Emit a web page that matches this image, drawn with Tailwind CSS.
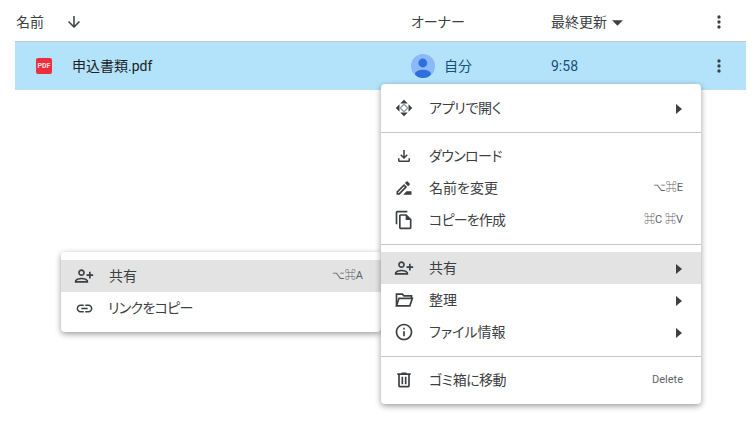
<!DOCTYPE html>
<html lang="ja">
<head>
    <meta charset="UTF-8">
    <title>Drive</title>
    <script src="https://cdn.jsdelivr.net/npm/@tailwindcss/browser@4"></script>
</head>
<body class="bg-white">
    <div class="relative w-[755px] h-[434px] overflow-hidden bg-white text-[14px] text-[#3c4043] [font-feature-settings:'palt'] font-['Roboto','Noto_Sans_CJK_JP',sans-serif]">
        <div class="ml-[15px] w-[731px]">
            <div class="grid grid-cols-[396px_140px_1fr_56px] items-center h-[42px] border-b border-[#c4c7c5] pt-[3px]">
                <div class="flex items-center pl-[1px]">
                    <span class="w-[49px]">名前</span>
                    <svg class="w-[18px] h-[18px] fill-[#3c4043]" viewBox="0 0 24 24"><path d="M20 12l-1.41-1.41L13 16.17V4h-2v12.17l-5.58-5.59L4 12l8 8 8-8z"/></svg>
                </div>
                <span>オーナー</span>
                <div class="flex items-center gap-[4px]">
                    <span>最終更新</span>
                    <svg class="w-[13px] h-[13px] fill-[#3c4043]" viewBox="0 0 12 12"><path d="M1 4h10L6 9z"/></svg>
                </div>
                <svg class="w-[20px] h-[20px] ml-[19px] fill-[#3c4043]" viewBox="0 0 24 24"><path d="M12 8a2 2 0 100-4 2 2 0 000 4zm0 2a2 2 0 100 4 2 2 0 000-4zm0 6a2 2 0 100 4 2 2 0 000-4z"/></svg>
            </div>
            <div class="grid grid-cols-[396px_140px_1fr_56px] items-center h-[48px] bg-[#b3e3fb]">
                <div class="flex items-center pl-[21px]">
                    <div class="flex items-center justify-center w-[16px] h-[16px] rounded-[2px] bg-[#f02d3f] text-[#ffe4e6] text-[7px] font-bold leading-none">PDF</div>
                    <span class="ml-[20px] text-[#202124]">申込書類.pdf</span>
                </div>
                <div class="flex items-center gap-[9px] text-[#174e7c]">
                    <svg class="w-[24px] h-[24px] rounded-full bg-[#8ab8f8]" viewBox="0 0 24 24"><circle cx="11.8" cy="9" r="4.4" fill="#2f6fdb"/><ellipse cx="12" cy="20" rx="8" ry="4.2" fill="#2f6fdb"/></svg>
                    <span>自分</span>
                </div>
                <span class="text-[#174e7c]">9:58</span>
                <svg class="w-[20px] h-[20px] ml-[19px] fill-[#3c4043]" viewBox="0 0 24 24"><path d="M12 8a2 2 0 100-4 2 2 0 000 4zm0 2a2 2 0 100 4 2 2 0 000-4zm0 6a2 2 0 100 4 2 2 0 000-4z"/></svg>
            </div>
        </div>

        <!-- submenu -->
        <div class="absolute left-[61px] top-[252px] w-[320px] h-[80px] py-[8px] bg-white rounded-l-[4px] rounded-br-[4px] shadow-[0_2px_6px_rgba(0,0,0,0.4)]">
            <div class="flex items-center h-[32px] pl-[13px] pr-[18px] bg-[#e3e3e3]">
                <svg class="w-[20px] h-[20px] fill-[#3c4043] -scale-x-100" viewBox="0 0 24 24"><path d="M15 12c2.21 0 4-1.79 4-4s-1.79-4-4-4-4 1.79-4 4 1.79 4 4 4zm0-6c1.1 0 2 .9 2 2s-.9 2-2 2-2-.9-2-2 .9-2 2-2zm0 8c-2.67 0-8 1.34-8 4v2h16v-2c0-2.66-5.33-4-8-4zm-6 4c.22-.72 3.31-2 6-2 2.7 0 5.8 1.29 6 2H9zm-3-3v-3h3v-2H6V7H4v3H1v2h3v3h2z"/></svg>
                <span class="ml-[15px]">共有</span>
                <span class="ml-auto pt-[1px] text-[11px] text-[#5f6368]">⌥⌘A</span>
            </div>
            <div class="flex items-center h-[32px] pl-[14px]">
                <svg class="w-[19px] h-[19px] fill-[#3c4043]" viewBox="0 0 24 24"><path d="M3.9 12c0-1.71 1.39-3.1 3.1-3.1h4V7H7c-2.76 0-5 2.24-5 5s2.24 5 5 5h4v-1.9H7c-1.71 0-3.1-1.39-3.1-3.1zM8 13h8v-2H8v2zm9-6h-4v1.9h4c1.71 0 3.1 1.39 3.1 3.1s-1.39 3.1-3.1 3.1h-4V17h4c2.76 0 5-2.24 5-5s-2.24-5-5-5z"/></svg>
                <span class="ml-[14px] tracking-[-0.7px]">リンクをコピー</span>
            </div>
        </div>

        <!-- context menu -->
        <div class="absolute left-[381px] top-[84px] w-[320px] h-[320px] py-[8px] bg-white rounded-[4px] shadow-[0_2px_6px_rgba(0,0,0,0.4)]">
            <div class="flex items-center h-[32px] pl-[14px] pr-[18px]">
                <svg class="w-[18px] h-[18px]" viewBox="0 0 24 24"><path class="fill-[#3c4043]" d="M12 1l5 5H7zM12 23l-5-5h10zM1 12l5-5v10zM23 12l-5 5V7z"/><path class="fill-none stroke-[#9aa0a6] stroke-2" d="M12 7l5 5-5 5-5-5z"/></svg>
                <span class="ml-[16px] tracking-[-0.3px]">アプリで開く</span>
                <svg class="ml-auto mt-[2px] w-[8px] h-[10px] fill-[#3c4043]" viewBox="0 0 8 10"><path d="M1 0l6 5-6 5z"/></svg>
            </div>
            <div class="mt-[8px] mb-[7px] border-t border-[#c4c7c5]"></div>
            <div class="flex items-center h-[32px] pl-[14px] pr-[18px]">
                <svg class="w-[18px] h-[18px] fill-[#3c4043]" viewBox="0 0 24 24"><path d="M18 15v3H6v-3H4v3c0 1.1.9 2 2 2h12c1.1 0 2-.9 2-2v-3h-2zm-1-4l-1.41-1.41L13 12.17V4h-2v8.17L8.41 9.59 7 11l5 5 5-5z"/></svg>
                <span class="ml-[16px] tracking-[-0.6px]">ダウンロード</span>
            </div>
            <div class="flex items-center h-[32px] pl-[13px] pr-[18px]">
                <svg class="w-[20px] h-[20px] fill-[#3c4043]" viewBox="0 0 24 24"><path d="M15 16l-4 4h10v-4h-6zM12.06 7.19L3 16.25V20h3.75l9.06-9.06-3.75-3.75zM5.92 18H5v-.92l7.06-7.06.92.92L5.92 18zM18.71 8.04c.39-.39.39-1.02 0-1.41l-2.34-2.34a.9959.9959 0 00-1.41 0l-1.83 1.83 3.75 3.75 1.83-1.83z"/></svg>
                <span class="ml-[15px]">名前を変更</span>
                <span class="ml-auto pt-[1px] text-[11px] text-[#5f6368]">⌥⌘E</span>
            </div>
            <div class="flex items-center h-[32px] pl-[13px] pr-[18px]">
                <svg class="w-[20px] h-[20px] fill-[#3c4043]" viewBox="0 0 24 24"><path d="M16 1H4c-1.1 0-2 .9-2 2v14h2V3h12V1zm-1 4H8c-1.1 0-2 .9-2 2v14c0 1.1.9 2 2 2h11c1.1 0 2-.9 2-2V11l-6-6zM8 21V7h6v5h5v9H8z"/></svg>
                <span class="ml-[15px] tracking-[-0.8px]">コピーを作成</span>
                <span class="ml-auto pt-[1px] text-[11px] text-[#5f6368]">⌘C ⌘V</span>
            </div>
            <div class="mt-[8px] mb-[7px] border-t border-[#c4c7c5]"></div>
            <div class="flex items-center h-[32px] pl-[13px] pr-[18px] bg-[#e3e3e3]">
                <svg class="w-[20px] h-[20px] fill-[#3c4043] -scale-x-100" viewBox="0 0 24 24"><path d="M15 12c2.21 0 4-1.79 4-4s-1.79-4-4-4-4 1.79-4 4 1.79 4 4 4zm0-6c1.1 0 2 .9 2 2s-.9 2-2 2-2-.9-2-2 .9-2 2-2zm0 8c-2.67 0-8 1.34-8 4v2h16v-2c0-2.66-5.33-4-8-4zm-6 4c.22-.72 3.31-2 6-2 2.7 0 5.8 1.29 6 2H9zm-3-3v-3h3v-2H6V7H4v3H1v2h3v3h2z"/></svg>
                <span class="ml-[15px]">共有</span>
                <svg class="ml-auto mt-[2px] w-[8px] h-[10px] fill-[#3c4043]" viewBox="0 0 8 10"><path d="M1 0l6 5-6 5z"/></svg>
            </div>
            <div class="flex items-center h-[32px] pl-[13px] pr-[18px]">
                <svg class="w-[20px] h-[20px] fill-none stroke-[#3c4043] stroke-2" viewBox="0 0 24 24"><path d="M3 19V5h7l2 2h9v3"/><path d="M3 19l3-9h16l-3 9z"/></svg>
                <span class="ml-[15px]">整理</span>
                <svg class="ml-auto mt-[2px] w-[8px] h-[10px] fill-[#3c4043]" viewBox="0 0 8 10"><path d="M1 0l6 5-6 5z"/></svg>
            </div>
            <div class="flex items-center h-[32px] pl-[13px] pr-[18px]">
                <svg class="w-[20px] h-[20px] fill-[#3c4043]" viewBox="0 0 24 24"><path d="M11 7h2v2h-2zm0 4h2v6h-2zm1-9C6.48 2 2 6.48 2 12s4.48 10 10 10 10-4.48 10-10S17.52 2 12 2zm0 18c-4.41 0-8-3.59-8-8s3.59-8 8-8 8 3.59 8 8-3.59 8-8 8z"/></svg>
                <span class="ml-[15px]">ファイル情報</span>
                <svg class="ml-auto mt-[2px] w-[8px] h-[10px] fill-[#3c4043]" viewBox="0 0 8 10"><path d="M1 0l6 5-6 5z"/></svg>
            </div>
            <div class="mt-[8px] mb-[7px] border-t border-[#c4c7c5]"></div>
            <div class="flex items-center h-[32px] pl-[13px] pr-[18px]">
                <svg class="w-[20px] h-[20px] fill-[#3c4043]" viewBox="0 0 24 24"><path d="M15 4V3H9v1H4v2h1v13c0 1.1.9 2 2 2h10c1.1 0 2-.9 2-2V6h1V4h-5zm2 15H7V6h10v13zM9 8h2v9H9zm4 0h2v9h-2z"/></svg>
                <span class="ml-[15px] tracking-[-0.5px]">ゴミ箱に移動</span>
                <span class="ml-auto pt-[1px] text-[11px] text-[#5f6368]">Delete</span>
            </div>
        </div>
    </div>
</body>
</html>
